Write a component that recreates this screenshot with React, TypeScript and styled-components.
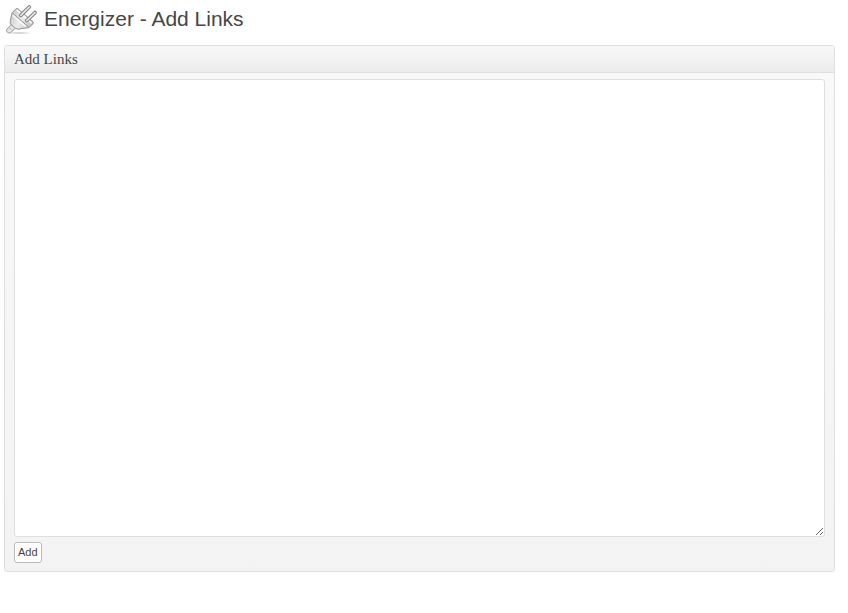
import React from "react";
import styled, { createGlobalStyle } from "styled-components";

const GlobalStyle = createGlobalStyle`
  *, *::before, *::after { box-sizing: border-box; }
  body {
    margin: 0;
    background: #fff;
    color: #464646;
    font-family: "Liberation Sans", Arial, sans-serif;
  }
`;

const Page = styled.main`
  padding: 4px 13px 0 4px;
`;

const TitleBar = styled.header`
  display: flex;
  align-items: flex-start;
  gap: 6px;
  height: 41px;
`;

const Title = styled.h1`
  margin: 0;
  font-size: 21px;
  line-height: 30px;
  font-weight: 400;
`;

const Panel = styled.section`
  border: 1px solid #dfdfdf;
  border-radius: 3px;
  background: linear-gradient(#f9f9f9, #f3f3f3);
`;

const PanelTitle = styled.h2`
  margin: 0;
  padding: 0 9px;
  border-bottom: 1px solid #dfdfdf;
  border-radius: 2px 2px 0 0;
  background: linear-gradient(#f8f8f8, #ececec);
  font-family: Georgia, "Liberation Serif", serif;
  font-size: 15px;
  line-height: 26px;
  font-weight: 400;
`;

const LinkForm = styled.form`
  display: flex;
  flex-direction: column;
  align-items: flex-start;
  gap: 5px;
  padding: 6px 9px 8px;
`;

const LinksInput = styled.textarea`
  display: block;
  width: 100%;
  margin: 0;
  padding: 0 4px;
  border: 1px solid #dfdfdf;
  border-radius: 3px;
  outline: none;
  background: #fff;
  color: #333;
  font-family: "Liberation Sans", Arial, sans-serif;
  font-size: 12px;
  line-height: 19px;
  resize: both;
`;

const AddButton = styled.button`
  padding: 0 3px;
  border: 1px solid #bbb;
  border-radius: 3px;
  background: #fff;
  color: #464646;
  font-family: "Liberation Sans", Arial, sans-serif;
  font-size: 11px;
  line-height: 19px;
  cursor: pointer;
`;

const PlugIcon = () => (
  <svg width="34" height="32" viewBox="0 0 34 32" aria-hidden="true">
    <defs>
      <linearGradient id="plugBody" x1="0" y1="0.2" x2="1" y2="0.8">
        <stop offset="0" stopColor="#c6c6c6" />
        <stop offset="0.5" stopColor="#ececec" />
        <stop offset="1" stopColor="#bdbdbd" />
      </linearGradient>
      <radialGradient id="plugShadow">
        <stop offset="0" stopColor="#bbb" />
        <stop offset="1" stopColor="#fff" />
      </radialGradient>
    </defs>
    <ellipse cx="15" cy="29" rx="14" ry="1.2" fill="url(#plugShadow)" />
    <path d="M8 8.8 12.2 4.6 13.8 4.6 29.2 18 29.2 19.6 25 23.6 14 25.2 11.3 24.3 6.3 19.8 6.2 17.6Z" fill="url(#plugBody)" stroke="#939393" strokeWidth="1" strokeLinejoin="round" />
    <path d="M12.6 6 27.6 19.2" fill="none" stroke="#fff" strokeWidth="1.3" />
    <path d="M8.8 9.4 24.6 23" fill="none" stroke="#979797" strokeWidth="1" />
    <path d="M8.6 11.2 21.6 22.6" fill="none" stroke="#fafafa" strokeWidth="1.5" />
    <path d="M16.8 11.3 25.2 3M22.8 16.5 31 8.6" fill="none" stroke="#858585" strokeWidth="3.8" strokeLinecap="round" />
    <path d="M16.8 11.3 25.2 3M22.8 16.5 31 8.6" fill="none" stroke="#e9e9e9" strokeWidth="1.7" strokeLinecap="round" />
    <path d="M7 20.4 11.3 24.3 8 27.3C6.7 29.5 3.4 29.3 2.7 27.2 2.2 25.6 3.1 24.3 5 23.5Z" fill="#e6e6e6" stroke="#989898" strokeWidth="1" />
    <path d="m5.5 23.8 2.6 2.6" fill="none" stroke="#b5b5b5" strokeWidth="1" />
  </svg>
);

export default function App() {
  return (
    <>
      <GlobalStyle />
      <Page>
        <TitleBar>
          <PlugIcon />
          <Title>Energizer - Add Links</Title>
        </TitleBar>
        <Panel>
          <PanelTitle id="add-links-title">Add Links</PanelTitle>
          <LinkForm onSubmit={(event) => event.preventDefault()}>
            <LinksInput rows={24} aria-labelledby="add-links-title" />
            <AddButton type="submit">Add</AddButton>
          </LinkForm>
        </Panel>
      </Page>
    </>
  );
}
